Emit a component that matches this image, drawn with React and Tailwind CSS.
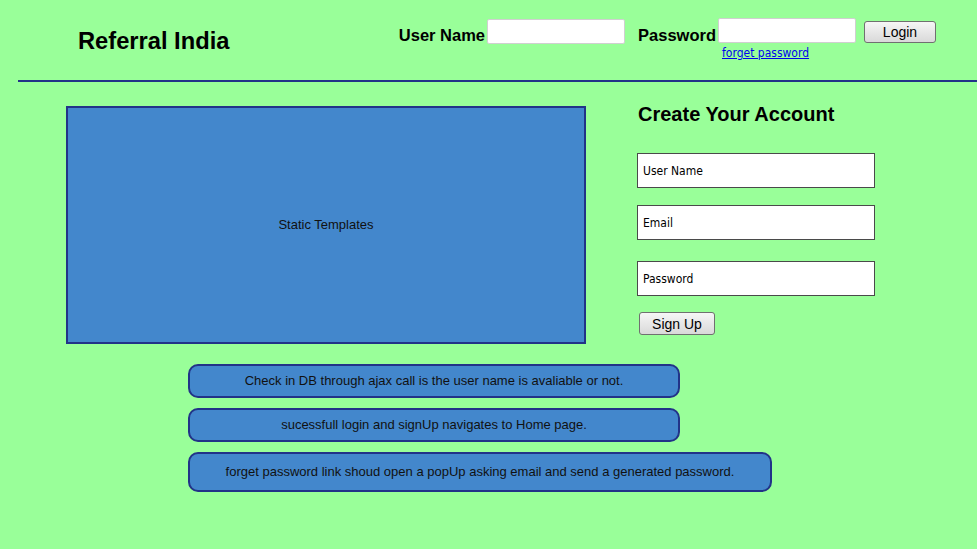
import React from 'react';

const notes = [
    { text: 'Check in DB through ajax call is the user name is avaliable or not.', w: 'w-[492px]', h: 'h-[34px]' },
    { text: 'sucessfull login and signUp navigates to Home page.', w: 'w-[492px]', h: 'h-[34px]' },
    { text: 'forget password link shoud open a popUp asking email and send a generated password.', w: 'w-[584px]', h: 'h-[40px]' },
];

function WinButton({ label, className }) {
    return (
        <button
            className={`bg-gradient-to-b from-[#f6f6f6] to-[#d9d9d9] border border-[#707070] rounded-[3px] text-[14px] text-black leading-none ${className}`}
        >
            {label}
        </button>
    );
}

function SketchInput({ placeholder }) {
    return (
        <div className="w-[238px] h-[35px] bg-white border-[1.5px] border-[#4a4a4a] flex items-center pl-[5px] text-[12px] text-black font-['DejaVu_Sans_Condensed','DejaVu_Sans',sans-serif]">
            {placeholder}
        </div>
    );
}

export default function App() {
    return (
        <div className="w-[977px] h-[549px] bg-[#99ff99] font-['Liberation_Sans',Arial,sans-serif] text-black overflow-hidden">
            {/* header */}
            <header className="h-[80px] flex justify-between pl-[78px] pr-[41px]">
                <h1 className="mt-[26px] text-[23.7px] font-bold leading-[30px]">Referral India</h1>
                <div className="flex items-start pt-[18px]">
                    <span className="mt-[6px] text-[16.5px] font-bold leading-[22px] mr-[2px]">User Name</span>
                    <div className="mt-[1px] w-[138px] h-[25px] bg-white border border-[#d0d0d0] rounded-[2px]" />
                    <span className="ml-[13px] mt-[6px] text-[16.5px] font-bold leading-[22px] mr-[2px]">Password</span>
                    <div className="flex flex-col items-start">
                        <div className="w-[138px] h-[25px] bg-white border border-[#d0d0d0] rounded-[2px]" />
                        <a href="#" className="ml-[4px] mt-[3px] text-[12px] leading-[15px] text-[#0000ee] underline font-['DejaVu_Sans_Condensed','DejaVu_Sans',sans-serif]">
                            forget password
                        </a>
                    </div>
                    <WinButton label="Login" className="ml-[8px] mt-[3px] w-[72px] h-[22px]" />
                </div>
            </header>
            <div className="ml-[18px] border-t-2 border-[#223388]" />

            {/* main */}
            <main className="flex mt-[24px]">
                <div className="ml-[66px] w-[520px] h-[238px] bg-[#4387cc] border-2 border-[#223388] flex items-center justify-center text-[13px] text-[#111]">
                    Static Templates
                </div>
                <div className="ml-[51px] flex flex-col">
                    <h2 className="-mt-[4px] ml-[1px] text-[20px] font-bold leading-[24px]">Create Your Account</h2>
                    <div className="mt-[27px] flex flex-col">
                        <SketchInput placeholder="User Name" />
                        <div className="mt-[17px]"><SketchInput placeholder="Email" /></div>
                        <div className="mt-[21px]"><SketchInput placeholder="Password" /></div>
                    </div>
                    <WinButton label="Sign Up" className="mt-[16px] ml-[2px] w-[76px] h-[23px]" />
                </div>
            </main>

            {/* notes */}
            <section className="ml-[188px] mt-[20px] flex flex-col gap-[10px]">
                {notes.map((n) => (
                    <div
                        key={n.text}
                        className={`${n.w} ${n.h} bg-[#4387cc] border-2 border-[#223388] rounded-[10px] flex items-center justify-center text-[13px] text-[#111]`}
                    >
                        {n.text}
                    </div>
                ))}
            </section>
        </div>
    );
}
